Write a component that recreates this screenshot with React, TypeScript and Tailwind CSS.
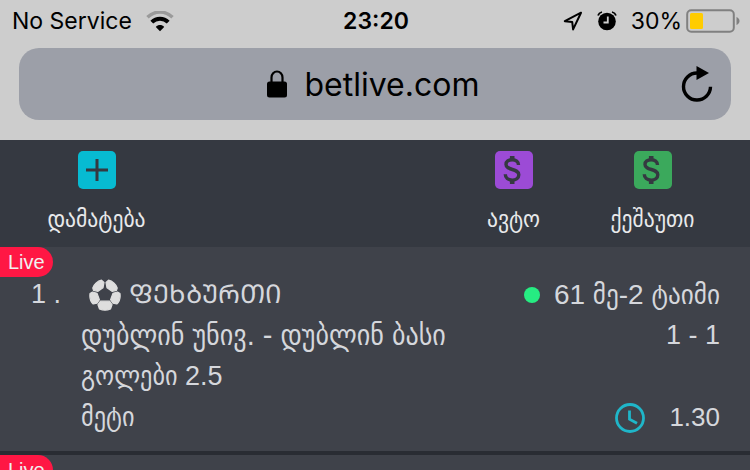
import type { ReactNode } from 'react';

const GEO = "font-['Liberation_Sans','DejaVu_Sans_Condensed','DejaVu_Sans',sans-serif]";

function StatusBar() {
  return (
    <div className="grid h-10 grid-cols-3 items-center pl-3 pr-[10px] pt-[2px] text-[23px] leading-7">
      <div className="flex items-center gap-[14px]">
        <span>No Service</span>
        <svg width="28" height="21" viewBox="0 0 28 21" aria-hidden="true">
          <path d="M1.500 6.300C8.500-.7 19.500-.7 26.500 6.300" fill="none" stroke="#9a9a9a" strokeWidth="3.400" />
          <path d="M5.800 11.200c4.600-4.600 11.800-4.600 16.400 0" fill="none" stroke="#000" strokeWidth="4" />
          <path d="M9.800 15.900c2.200-2.400 6.200-2.400 8.400 0L14 20.300z" fill="#000" />
        </svg>
      </div>
      <span className="text-center font-semibold">23:20</span>
      <div className="flex items-center justify-end">
        <svg className="mr-[14px]" width="20" height="20" viewBox="0 0 20 20" aria-hidden="true">
          <path d="M18 1.700 1.800 10.200l7.400.7.900 7.500z" fill="none" stroke="#000" strokeWidth="2" strokeLinejoin="round" />
        </svg>
        <svg className="mr-[14px]" width="20" height="20" viewBox="0 0 20 20" aria-hidden="true">
          <circle cx="10" cy="10.500" r="8.800" />
          <path d="M1 4.500C1.500 3 3 1.500 5 1M19 4.500C18.500 3 17 1.500 15 1" fill="none" stroke="#000" strokeWidth="1.800" />
          <path d="M10.800 5.500v6H6.500" fill="none" stroke="#cdcdcd" strokeWidth="1.800" />
        </svg>
        <span className="mr-1">30%</span>
        <svg width="54" height="24" viewBox="0 0 54 24" aria-hidden="true">
          <rect x="1.200" y="1.200" width="46.600" height="21.600" rx="4" fill="none" stroke="#808080" strokeWidth="2" />
          <rect x="4" y="4" width="13" height="16" rx="1.500" fill="#ffcc00" />
          <path d="M50.500 8c4 1.500 4 6.500 0 8z" fill="#808080" />
        </svg>
      </div>
    </div>
  );
}

function AddressBar() {
  return (
    <div className="px-[19px] pb-5 pt-2">
      <div className="relative flex h-[72px] items-center justify-center gap-[18px] rounded-[20px] bg-[#9c9fa8] pr-1">
        <svg width="20" height="28" viewBox="0 0 20 28" aria-hidden="true">
          <path d="M4.500 13V7.500a5.500 6 0 0 1 11 0V13" fill="none" stroke="#000" strokeWidth="2.200" />
          <rect y="11.500" width="20" height="16" rx="2.500" />
        </svg>
        <span className="pt-[2px] text-[32px] leading-10">betlive.com</span>
        <button type="button" aria-label="Reload" className="absolute right-[18px]">
          <svg width="32" height="38" viewBox="0 0 32 38" aria-hidden="true">
            <path d="M16 8a13.500 13.500 0 1 0 13.500 13.800" fill="none" stroke="#000" strokeWidth="3.400" />
            <path d="M15.500 1v14L28 8z" />
          </svg>
        </button>
      </div>
    </div>
  );
}

function ToolButton({ label, icon }: { label: string; icon: ReactNode }) {
  return (
    <button type="button" className="flex w-[139px] flex-col items-center gap-4">
      {icon}
      <span className="whitespace-nowrap text-[24px] leading-7">{label}</span>
    </button>
  );
}

function AddIcon() {
  return (
    <svg width="38" height="38" viewBox="0 0 38 38" aria-hidden="true">
      <rect width="38" height="38" rx="5" fill="#07bbd2" />
      <path d="M19 8v22M8 19h22" stroke="#353941" strokeWidth="3" />
    </svg>
  );
}

function DollarIcon({ fill }: { fill: string }) {
  return (
    <svg width="38" height="38" viewBox="0 0 38 38" aria-hidden="true">
      <rect width="38" height="38" rx="5" fill={fill} />
      <path
        d="M23.500 14c0-3.600-2.600-5.300-6.300-5.300-3.700 0-6.200 1.800-6.200 4.700 0 6.600 12.800 3.600 12.800 10.300 0 3.400-2.800 5.400-6.600 5.400-4.200 0-6.900-2.200-6.900-5.800"
        fill="none"
        stroke="#353941"
        strokeWidth="3.400"
      />
      <path d="M17.200 5v4M17.200 29v4" stroke="#353941" strokeWidth="4.600" />
    </svg>
  );
}

function BallIcon() {
  return (
    <svg width="32" height="32" viewBox="0 0 32 32" fill="#dedede" stroke="#dedede" strokeWidth="1.200" strokeLinejoin="round" aria-hidden="true">
      <path d="M3.800 9C4.500 6 8.500 2 12.500 1.200L15 3.500 14 8.800 9 12.300 4.500 11.300z" />
      <path d="M28.200 9C27.500 6 23.500 2 19.500 1.200L17 3.500l1 5.300 5 3.500 4.500-1z" />
      <path d="M1 14.500 3.500 13 8 14.300 10.400 20.700 8 24.200 4.200 25C1.500 22.500.5 18 1 14.500z" />
      <path d="M31 14.500 28.500 13 24 14.300 21.600 20.700 24 24.200 27.800 25C30.500 22.500 31.500 18 31 14.500z" />
      <path d="M11.500 22.200h9l2.500 3.500-1.500 4.300c-3.400 1.500-7.600 1.500-11 0L9 25.700z" />
    </svg>
  );
}

function ClockIcon() {
  return (
    <svg width="30" height="30" viewBox="0 0 30 30" fill="none" stroke="#1fb6c9" strokeWidth="2.800" aria-hidden="true">
      <circle cx="15" cy="15" r="13.500" />
      <path d="M14.500 7.500v8.700l7.500 4" />
    </svg>
  );
}

function LiveBadge() {
  return (
    <span className="absolute left-0 top-0 flex h-[30px] w-[53px] items-center rounded-r-full bg-[#ff1744] pl-2 text-[20px] leading-6 text-[#f0f0f0]">
      Live
    </span>
  );
}

export default function App() {
  return (
    <div className={`h-screen overflow-hidden bg-[#3f424a] ${GEO}`}>
      <header className="bg-[#cdcdcd] font-[Inter,sans-serif] text-black">
        <StatusBar />
        <AddressBar />
      </header>

      <nav className="flex h-[107px] items-start bg-[#353941] pl-[27px] pr-7 pt-[11px] text-[#e8e9eb]">
        <ToolButton label="დამატება" icon={<AddIcon />} />
        <div className="ml-auto flex">
          <ToolButton label="ავტო" icon={<DollarIcon fill="#9c4bd6" />} />
          <ToolButton label="ქეშაუთი" icon={<DollarIcon fill="#3ba95c" />} />
        </div>
      </nav>

      <main className="text-[#d5d7dc]">
        <article className="relative border-b-4 border-[#292c33] pb-[13px] pl-[31px] pr-[30px] pt-[27px] text-[27px] leading-[41px]">
          <LiveBadge />
          <div className="flex">
            <span className="w-[50px] shrink-0 whitespace-pre">1 .</span>
            <div className="min-w-0 flex-1 whitespace-nowrap">
              <div className="flex items-center justify-between">
                <h2 className="flex items-center gap-2 pl-2">
                  <BallIcon />
                  <span className="font-['DejaVu_Sans',sans-serif] text-[26px]">ᲤᲔᲮᲑᲣᲠᲗᲘ</span>
                </h2>
                <p className="flex items-center gap-[14px]">
                  <span className="size-4 rounded-full bg-[#26ec82]" />
                  <span className="text-[28px]">61 მე-2 ტაიმი</span>
                </p>
              </div>
              <div className="flex items-center justify-between">
                <p className="text-[29px]">დუბლინ უნივ. - დუბლინ ბასი</p>
                <p>1 - 1</p>
              </div>
              <p>გოლები 2.5</p>
              <div className="flex items-center justify-between">
                <p>მეტი</p>
                <p className="flex items-center gap-6">
                  <ClockIcon />
                  <span className="text-[26px]">1.30</span>
                </p>
              </div>
            </div>
          </div>
        </article>
        <article className="relative h-[204px]">
          <LiveBadge />
        </article>
      </main>
    </div>
  );
}
